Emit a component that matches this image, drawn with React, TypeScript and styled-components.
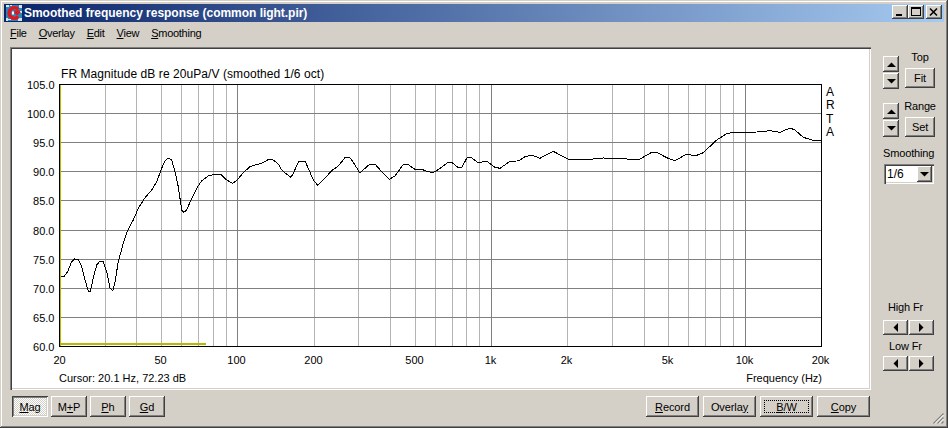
import React from "react";
import styled, { createGlobalStyle, css } from "styled-components";

const Global = createGlobalStyle`
  html, body { margin: 0; padding: 0; background: #d4d0c8; }
  * { box-sizing: border-box; }
`;

const uiFont = `"Liberation Sans", Arial, sans-serif`;
const raised = css`
  box-shadow: inset -1px -1px #404040, inset 1px 1px #ffffff, inset -2px -2px #808080, inset 2px 2px #d4d0c8;
`;

const Window = styled.div`
  position: relative;
  width: 948px;
  height: 428px;
  padding: 4px;
  background: #d4d0c8;
  display: flex;
  flex-direction: column;
  overflow: hidden;
  font-family: ${uiFont};
  font-size: 11px;
  color: #000;
  box-shadow: inset -1px -1px #404040, inset 1px 1px #d4d0c8, inset -2px -2px #808080, inset 2px 2px #ffffff;
`;
const TitleBar = styled.div`
  height: 18px;
  flex: none;
  display: flex;
  align-items: center;
  padding: 0 2px;
  background: linear-gradient(to right, #0a246a, #a6caf0);
`;
const AppIcon = styled.svg`
  width: 16px;
  height: 16px;
  flex: none;
  margin-bottom: 1px;
`;
const TitleText = styled.span`
  margin-left: 2px;
  flex: 1;
  color: #fff;
  font-weight: 700;
  font-size: 12px;
  letter-spacing: -0.03px;
  white-space: nowrap;
`;
const CaptionButtons = styled.div`
  display: flex;
  align-items: center;
  margin-bottom: 2px;
`;
const CaptionButton = styled.button<{ $gap?: number }>`
  width: 16px;
  height: 14px;
  padding: 0;
  border: 0;
  margin-left: ${(p) => p.$gap ?? 0}px;
  background: #d4d0c8;
  display: block;
  ${raised}
  svg { display: block; }
`;
const MenuBar = styled.div`
  height: 22px;
  flex: none;
  display: flex;
  align-items: center;
  gap: 12px;
  padding: 0 0 0 6px;
  font-size: 11px;
  letter-spacing: -0.27px;
`;
const MenuItem = styled.span`
  white-space: nowrap;
`;
const Body = styled.div`
  flex: 1;
  display: flex;
  min-height: 0;
`;
const Main = styled.div`
  width: 867px;
  flex: none;
  display: flex;
  flex-direction: column;
`;
const ChartPanel = styled.div`
  margin: 3px 0 0 6px;
  width: 861px;
  height: 343px;
  background: #fff;
  box-shadow: inset 1px 1px #808080, inset 2px 2px #404040, inset -1px -1px #ffffff, inset -2px -2px #d4d0c8;
  svg { display: block; }
`;
const ChartText = styled.text<{ $title?: boolean }>`
  font-family: ${uiFont};
  font-size: ${(p) => (p.$title ? 12 : 11)}px;
  letter-spacing: ${(p) => (p.$title ? 0.07 : 0)}px;
  fill: #000;
`;
const BottomBar = styled.div`
  margin-top: 6px;
  padding: 0 1px 0 8px;
  display: flex;
  justify-content: space-between;
`;
const ButtonGroup = styled.div<{ $gap: number }>`
  display: flex;
  gap: ${(p) => p.$gap}px;
`;
const WinButton = styled.button<{ $w: number; $h?: number; $pressed?: boolean; $focus?: boolean }>`
  position: relative;
  flex: none;
  width: ${(p) => p.$w}px;
  height: ${(p) => p.$h ?? 21}px;
  padding: 0;
  border: 0;
  font-family: ${uiFont};
  font-size: 11px;
  letter-spacing: -0.1px;
  color: #000;
  background: #d4d0c8;
  ${raised}
  ${(p) =>
    p.$pressed &&
    css`
      background: repeating-conic-gradient(#ffffff 0 25%, #d4d0c8 0 50%) 0 0 / 2px 2px;
      box-shadow: inset 1px 1px #404040, inset -1px -1px #ffffff, inset 2px 2px #808080, inset -2px -2px #d4d0c8;
    `}
  ${(p) =>
    p.$focus &&
    css`
      &::after {
        content: "";
        position: absolute;
        inset: 4px;
        border: 1px dotted #000;
      }
    `}
`;
const Side = styled.div`
  flex: 1;
  padding: 12px 0 0 12px;
  display: flex;
  flex-direction: column;
`;
const StepperGroup = styled.div<{ $mt: number; $h: number; $pb?: number }>`
  display: grid;
  grid-template-columns: 16px 30px;
  column-gap: 6px;
  flex: none;
  height: ${(p) => p.$h}px;
  margin-top: ${(p) => p.$mt}px;
  & > :last-child { padding-bottom: ${(p) => p.$pb ?? 0}px; }
`;
const ArrowStack = styled.div`
  display: flex;
  flex-direction: column;
  gap: 1px;
`;
const ArrowButton = styled.button<{ $w: number; $h: number }>`
  flex: none;
  width: ${(p) => p.$w}px;
  height: ${(p) => p.$h}px;
  padding: 0;
  border: 0;
  background: #d4d0c8;
  display: flex;
  align-items: center;
  justify-content: center;
  ${raised}
`;
const StepperRight = styled.div`
  height: 100%;
  min-height: 0;
  display: flex;
  flex-direction: column;
  align-items: center;
  justify-content: flex-end;
  gap: 4px;
`;
const SideLabel = styled.div<{ $mt?: number; $ml?: number }>`
  flex: none;
  font-size: 11px;
  line-height: 14px;
  height: 14px;
  white-space: nowrap;
  letter-spacing: -0.15px;
  margin-top: ${(p) => p.$mt ?? 0}px;
  margin-left: ${(p) => p.$ml ?? 0}px;
`;
const SelectBox = styled.div`
  margin: 4px 0 0 1px;
  width: 50px;
  height: 20px;
  background: #fff;
  display: flex;
  align-items: center;
  justify-content: space-between;
  padding: 0 2px 0 3px;
  font-size: 12px;
  box-shadow: inset 1px 1px #808080, inset 2px 2px #404040, inset -1px -1px #ffffff, inset -2px -2px #d4d0c8;
`;
const ArrowPair = styled.div<{ $mt: number }>`
  display: flex;
  gap: 1px;
  margin-top: ${(p) => p.$mt}px;
`;
const Grip = styled.svg`
  position: absolute;
  right: 4px;
  bottom: 4px;
  width: 12px;
  height: 12px;
`;

const Tri = ({ dir }: { dir: "up" | "down" | "left" | "right" }) => {
  const vertical = dir === "up" || dir === "down";
  const pts = {
    up: "0,5 9,5 4.5,0.5",
    down: "0,0 9,0 4.5,4.5",
    left: "5,0 5,9 0.5,4.5",
    right: "0,0 0,9 4.5,4.5",
  }[dir];
  return (
    <svg width={vertical ? 9 : 5} height={vertical ? 5 : 9} viewBox={vertical ? "0 0 9 5" : "0 0 5 9"}>
      <polygon points={pts} fill="#000" />
    </svg>
  );
};

const curve: [number, number][] = [
  [61,277],[64,276.7],[67.7,271.7],[71.7,261.7],[74.3,259],[78.3,259.3],[81.7,266.7],[85,280],[88.3,291],[90.3,291],[93.3,278],[96.7,265],[100,261],[103.3,261.7],[106.7,271.7],[110,288.3],[112.7,291],[115,281.7],[118.3,261.7],[123.3,243.3],[127.3,231],[133.3,220],[138.3,208.3],[145,197.7],[151.7,190],[156.7,181.7],[161.7,168.3],[165,160.7],[168.3,158.3],[171.7,160],[175,171.7],[178.3,186.7],[181.7,210],[183.7,212.3],[186.7,210],[191.7,198.3],[196.7,188.3],[201.7,180.7],[208.3,176],[215,174],[220.7,174.3],[226.7,180],[232.3,183.3],[236.7,180.7],[243.3,172.7],[250,166.7],[255,165],[261.7,163.3],[269.3,159],[273.3,160],[278.3,164],[281.7,170],[286.7,174.3],[291,177.3],[293.3,173.3],[298.3,162],[305,161],[308.3,168.3],[313.3,180],[317.7,185.3],[323.3,180],[331.7,170.7],[338.3,166],[345,157.7],[350,157.7],[355,165],[360,173.3],[365,168.3],[370,164],[375,164],[381.7,171.7],[389.3,179.3],[395,176],[403.3,164.3],[408.3,164.7],[415,169.3],[421.7,169.3],[426.7,171.3],[433.3,172.7],[440,168.3],[448.3,162.3],[451.7,162.3],[458.3,167.7],[461.7,167.3],[467.3,157.3],[471.7,158],[478.3,162.7],[486.7,161],[495,167.3],[500,168.3],[510,161.3],[516.7,161],[520,160],[525,156.7],[531.7,155],[540,158.3],[546,155],[553.3,151.3],[560,155],[568.3,159],[581.7,159],[586.7,159.7],[603.3,158],[626.7,159],[640,159],[651.7,152.3],[656.7,152.3],[666.7,157.7],[675,160.7],[686.7,154],[695,156],[703.3,152.7],[716.7,140],[726.7,133.7],[733.3,132.3],[756.7,132],[770,130.7],[780,132.3],[790,128],[795,130],[803.3,137.3],[811.7,140],[821,141],
];

const fx = (f: number) => Math.round(60 + Math.log10(f / 20) * 253.67) + 0.5;
const gridFreqs: number[] = [];
for (const d of [10, 100, 1000, 10000]) {
  for (let m = 1; m <= 9; m++) {
    const f = m * d;
    if (f > 20 && f < 20000) gridFreqs.push(f);
  }
}
const majors = new Set([100, 1000, 10000]);
const yLabels = ["105.0","100.0","95.0","90.0","85.0","80.0","75.0","70.0","65.0","60.0"];
const yPos = yLabels.map((_, i) => Math.round(84 + i * 29.11) + 0.5);
const xLabels: [string, number][] = [["20",20],["50",50],["100",100],["200",200],["500",500],["1k",1000],["2k",2000],["5k",5000],["10k",10000],["20k",20000]];

const Chart = () => (
  <svg width={861} height={343} viewBox="10 47 861 343">
    <g shapeRendering="crispEdges" strokeWidth={1} fill="none">
      {gridFreqs.map((f) => (
        <line key={f} x1={fx(f)} x2={fx(f)} y1={84} y2={346} stroke={majors.has(f) ? "#808080" : "#b4b4b4"} />
      ))}
      {yPos.slice(1, -1).map((y) => (
        <line key={y} x1={60} x2={821} y1={y} y2={y} stroke="#808080" />
      ))}
      <rect x={59.5} y={84.5} width={762} height={262} stroke="#000" />
      <line x1={60.5} x2={60.5} y1={85} y2={346} stroke="#b9b900" />
      <line x1={60} x2={206} y1={343.5} y2={343.5} stroke="#b9b900" strokeWidth={2} />
      <polyline points={curve.map((p) => p.join(",")).join(" ")} stroke="#000" />
    </g>
    <ChartText $title x={61} y={78}>FR Magnitude dB re 20uPa/V (smoothed 1/6 oct)</ChartText>
    {yLabels.map((t, i) => (
      <ChartText key={t} x={54.5} y={yPos[i] + 4} textAnchor="end">{t}</ChartText>
    ))}
    {xLabels.map(([t, f]) => (
      <ChartText key={t} x={fx(f) - 1} y={364} textAnchor="middle">{t}</ChartText>
    ))}
    <ChartText x={59} y={382}>Cursor: 20.1 Hz, 72.23 dB</ChartText>
    <ChartText x={822} y={382} textAnchor="end">Frequency (Hz)</ChartText>
    {["A","R","T","A"].map((c, i) => (
      <ChartText $title key={i} x={826} y={96 + i * 13.3}>{c}</ChartText>
    ))}
  </svg>
);

export default function App() {
  return (
    <>
      <Global />
      <Window>
        <TitleBar>
          <AppIcon viewBox="0 0 16 16">
            <rect width="16" height="16" fill="#2b86b8" />
            <path d="M0 0h3v2H0zM13 0h3v3h-3zM0 13h2v3H0zM12 13h4v3h-4zM4 0h2v1H4zM14 6h2v2h-2zM2 14h3v1H2z" fill="#cfe8f3" />
            <path d="M12.3 4.2A5.4 5.4 0 1 0 12.3 11.8" fill="none" stroke="#e8141c" strokeWidth="3.4" />
            <path d="M7 5.5h7.5l-1 1.5H15l-4 3.5-3.5-3.5H9.5z" fill="#e8141c" />
            <rect x="6" y="6.5" width="2" height="3" fill="#fff" />
          </AppIcon>
          <TitleText>Smoothed frequency response (common light.pir)</TitleText>
          <CaptionButtons>
            <CaptionButton aria-label="Minimize">
              <svg width="16" height="14"><rect x="4" y="9" width="6" height="2" fill="#000" /></svg>
            </CaptionButton>
            <CaptionButton aria-label="Maximize">
              <svg width="16" height="14"><path d="M3 2h10v9H3zM4 4v6h8V4z" fill="#000" fillRule="evenodd" /></svg>
            </CaptionButton>
            <CaptionButton $gap={2} aria-label="Close">
              <svg width="16" height="14"><path d="M4 3.5l7 7M11 3.5l-7 7" stroke="#000" strokeWidth="1.6" fill="none" /></svg>
            </CaptionButton>
          </CaptionButtons>
        </TitleBar>
        <MenuBar>
          <MenuItem><u>F</u>ile</MenuItem>
          <MenuItem><u>O</u>verlay</MenuItem>
          <MenuItem><u>E</u>dit</MenuItem>
          <MenuItem><u>V</u>iew</MenuItem>
          <MenuItem><u>S</u>moothing</MenuItem>
        </MenuBar>
        <Body>
          <Main>
            <ChartPanel><Chart /></ChartPanel>
            <BottomBar>
              <ButtonGroup $gap={3}>
                <WinButton $w={36} $pressed><u>M</u>ag</WinButton>
                <WinButton $w={36}>M<u>+</u>P</WinButton>
                <WinButton $w={36}><u>P</u>h</WinButton>
                <WinButton $w={36}><u>G</u>d</WinButton>
              </ButtonGroup>
              <ButtonGroup $gap={4}>
                <WinButton $w={53}><u>R</u>ecord</WinButton>
                <WinButton $w={53}>Overla<u>y</u></WinButton>
                <WinButton $w={53} $focus><u>B</u>/W</WinButton>
                <WinButton $w={53}><u>C</u>opy</WinButton>
              </ButtonGroup>
            </BottomBar>
          </Main>
          <Side>
            <StepperGroup $mt={0} $h={33} $pb={1}>
              <ArrowStack>
                <ArrowButton $w={16} $h={16}><Tri dir="up" /></ArrowButton>
                <ArrowButton $w={16} $h={16}><Tri dir="down" /></ArrowButton>
              </ArrowStack>
              <StepperRight>
                <SideLabel>Top</SideLabel>
                <WinButton $w={30} $h={20}>Fit</WinButton>
              </StepperRight>
            </StepperGroup>
            <StepperGroup $mt={14} $h={34}>
              <ArrowStack>
                <ArrowButton $w={16} $h={16}><Tri dir="up" /></ArrowButton>
                <ArrowButton $w={16} $h={17}><Tri dir="down" /></ArrowButton>
              </ArrowStack>
              <StepperRight>
                <SideLabel>Range</SideLabel>
                <WinButton $w={30} $h={20}>Set</WinButton>
              </StepperRight>
            </StepperGroup>
            <SideLabel $mt={9}>Smoothing</SideLabel>
            <SelectBox>
              1/6
              <ArrowButton $w={15} $h={16}><Tri dir="down" /></ArrowButton>
            </SelectBox>
            <SideLabel $mt={116} $ml={5}>High Fr</SideLabel>
            <ArrowPair $mt={6}>
              <ArrowButton $w={25} $h={15}><Tri dir="left" /></ArrowButton>
              <ArrowButton $w={25} $h={15}><Tri dir="right" /></ArrowButton>
            </ArrowPair>
            <SideLabel $mt={4} $ml={6}>Low Fr</SideLabel>
            <ArrowPair $mt={3}>
              <ArrowButton $w={25} $h={15}><Tri dir="left" /></ArrowButton>
              <ArrowButton $w={25} $h={15}><Tri dir="right" /></ArrowButton>
            </ArrowPair>
          </Side>
        </Body>
        <Grip viewBox="0 0 12 12">
          <path d="M11.5 1.5L1.5 11.5M11.5 5.5L5.5 11.5M11.5 9.5L9.5 11.5" stroke="#808080" strokeWidth="1.2" fill="none" />
          <path d="M11.5 3L3 11.5M11.5 7L7 11.5" stroke="#fff" strokeWidth="1" fill="none" />
        </Grip>
      </Window>
    </>
  );
}
